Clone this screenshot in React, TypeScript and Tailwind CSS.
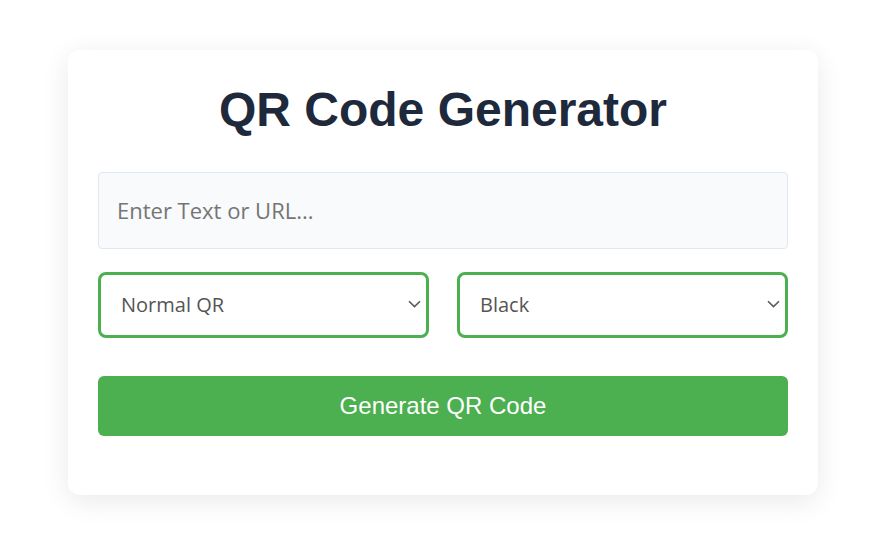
import React, { useState } from 'react';

const Chevron = () => (
  <svg
    className="pointer-events-none absolute right-[8px] top-1/2 -translate-y-1/2 mt-[-1px]"
    width="13"
    height="8"
    viewBox="0 0 13 8"
    fill="none"
  >
    <path d="M1 1.2 L6.5 6.6 L12 1.2" stroke="#595959" strokeWidth="1.6" />
  </svg>
);

const App: React.FC = () => {
  const [text, setText] = useState('');
  const [type, setType] = useState('normal');
  const [color, setColor] = useState('black');

  return (
    <div className="min-h-screen w-full bg-white flex items-center justify-center pl-[3px] font-['Liberation_Sans',Arial,sans-serif]">
      <div className="w-[750px] bg-white rounded-xl shadow-[0_6px_28px_rgba(0,0,0,0.09)] px-[30px] pt-[32px] pb-[59px]">
        <h1 className="text-[48px] leading-[55px] font-bold text-center text-[#1e293b] mb-[35px]">
          QR Code Generator
        </h1>

        <input
          type="text"
          value={text}
          onChange={(e) => setText(e.target.value)}
          placeholder="Enter Text or URL..."
          className="block w-full h-[77px] px-[18px] bg-[#f8fafc] border border-[#e2e8f0] rounded-[4px] text-[22px] text-[#333] placeholder:text-[#757575] font-['Open_Sans',sans-serif] outline-none"
        />

        <div className="grid grid-cols-2 gap-[28px] mt-[23px]">
          <div className="relative">
            <select
              value={type}
              onChange={(e) => setType(e.target.value)}
              className="appearance-none w-full h-[66px] pl-[20px] pr-[30px] border-[3px] border-[#4caf50] rounded-[8px] bg-white text-[20px] text-[#555] font-['Open_Sans',sans-serif] outline-none"
            >
              <option value="normal">Normal QR</option>
              <option value="logo">QR with Logo</option>
            </select>
            <Chevron />
          </div>
          <div className="relative">
            <select
              value={color}
              onChange={(e) => setColor(e.target.value)}
              className="appearance-none w-full h-[66px] pl-[20px] pr-[30px] border-[3px] border-[#4caf50] rounded-[8px] bg-white text-[20px] text-[#555] font-['Open_Sans',sans-serif] outline-none"
            >
              <option value="black">Black</option>
              <option value="blue">Blue</option>
              <option value="red">Red</option>
            </select>
            <Chevron />
          </div>
        </div>

        <button className="block w-full h-[60px] mt-[38px] bg-[#4caf50] rounded-[6px] text-white text-[24px]">
          Generate QR Code
        </button>
      </div>
    </div>
  );
};

export default App;
